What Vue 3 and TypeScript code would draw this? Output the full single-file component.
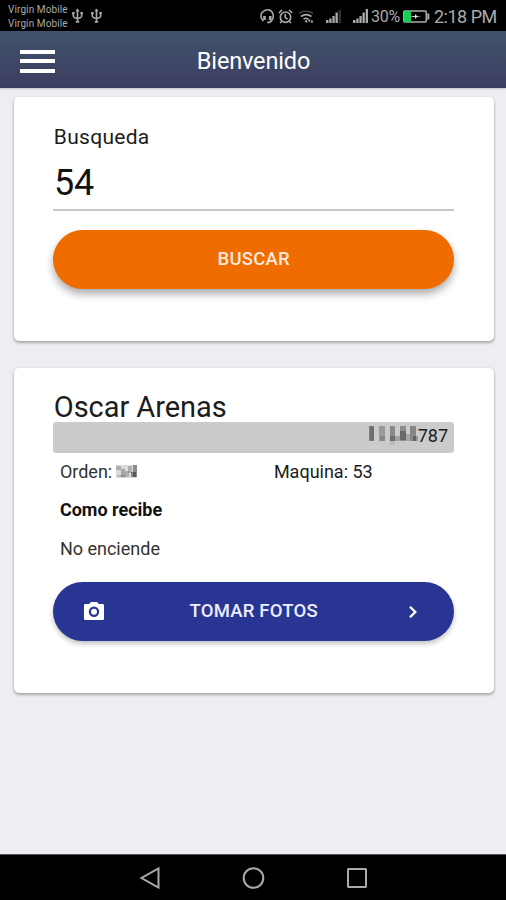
<script setup lang="ts">
import { ref } from 'vue'

const query = ref('54')
const carriers = ['Virgin Mobile', 'Virgin Mobile']

interface Cell { x: number; y: number; w: number; h: number; o: number }

const idMask: Cell[] = [
  { x: 0, y: 2, w: 5, h: 15, o: 0.38 }, { x: 1, y: 3, w: 4, h: 13, o: 0.12 },
  { x: 10, y: 2, w: 6, h: 15, o: 0.24 }, { x: 11, y: 12, w: 5, h: 5, o: 0.12 },
  { x: 21, y: 2, w: 5, h: 15, o: 0.32 }, { x: 21, y: 12, w: 10, h: 5, o: 0.2 },
  { x: 31, y: 2, w: 6, h: 15, o: 0.3 }, { x: 31, y: 7, w: 6, h: 9, o: 0.25 },
  { x: 37, y: 10, w: 4, h: 7, o: 0.18 }, { x: 41, y: 2, w: 6, h: 15, o: 0.34 },
  { x: 44, y: 12, w: 5, h: 5, o: 0.25 }, { x: 21, y: 17, w: 5, h: 4, o: 0.08 },
]
const orderMask: Cell[] = [
  { x: 0, y: 0, w: 21, h: 13, o: 0.14 }, { x: 0, y: 1, w: 5, h: 4, o: 0.2 },
  { x: 5, y: 4, w: 4, h: 8, o: 0.24 }, { x: 9, y: 6, w: 4, h: 6, o: 0.2 },
  { x: 12, y: 1, w: 4, h: 7, o: 0.2 }, { x: 15, y: 7, w: 5, h: 5, o: 0.38 },
  { x: 17, y: 0, w: 4, h: 12, o: 0.36 }, { x: 1, y: 10, w: 8, h: 2, o: 0.15 },
]
</script>

<template>
  <div class="screen">
    <div class="status">
      <div class="carriers">
        <span v-for="(c, i) in carriers" :key="i">{{ c }}</span>
      </div>
      <svg v-for="n in 2" :key="n" class="usb" width="11" height="16" viewBox="0 0 11 16">
        <path d="M5.5 1v13M1.3 4.5v3.2q0 2 4.2 2.8 4.2-.8 4.2-2.8V4.5" />
        <path d="M3.5 3.5 5.5.5l2 3zM3.8 13h3.4v1.8H3.8zM.2 4h2.4v2.2H.2zM8.4 4h2.4v2.2H8.4z" class="solid" />
      </svg>
      <span class="spacer"></span>
      <svg class="headset" width="15" height="15" viewBox="0 0 15 15">
        <path d="M3.5 12C0 9.5.2 4.5 3.2 2.5 6 .2 9.6.5 11.8 2.7c2 2.2 2 6.3 0 8.3" />
        <path d="M4.5 7v4M10.2 7v4" class="thick" />
        <path d="M12 10.5q-.5 3-4.8 3" />
      </svg>
      <svg class="alarm" width="15" height="15" viewBox="0 0 15 15">
        <circle cx="7.5" cy="8.2" r="5.2" />
        <path d="M7.3 5v3.6l2.4 1.5M.8 4 4 1M11 1l3.2 3M3.5 12.5 2 14M11.5 12.5 13 14" />
      </svg>
      <svg class="wifi" width="17" height="15" viewBox="0 0 17 15">
        <path d="M1 4.2Q8 .2 15 4.2" class="dim" />
        <path d="M3 7.5q5.200-3.800 10.500 0M5.500 10.200q2.500-2 5 0" />
        <path d="M6.500 13.300l1.700-3 1.700 3zM9.700 10.500h3l-1.500 3zM12.400 13.600l1.500-3 1.500 3z" class="solid" />
      </svg>
      <svg class="signal" width="16" height="14" viewBox="0 0 16 14">
        <path d="M0 11h2.5v3H0zM3.3 9.5h2.3V14H3.3zM6.4 7h2.3v7H6.4zM9.5 3.5h2.3V14H9.5z" />
        <path d="M12.7 1h2.3v13h-2.3z" class="off" />
      </svg>
      <svg class="signal second" width="16" height="14" viewBox="0 0 16 14">
        <path d="M0 11h2.5v3H0zM3.3 9.5h2.3V14H3.3zM6.4 7h2.3v7H6.4zM9.5 3.5h2.3V14H9.5zM12.7 0H15v14h-2.3z" />
      </svg>
      <span class="percent">30%</span>
      <svg class="battery" width="27" height="13" viewBox="0 0 27 13">
        <rect x=".8" y="1" width="22.5" height="11" rx="1" />
        <path d="M1 1h7v11H1z" class="green" />
        <path d="M24.3 3.5h2v6h-2z" class="solid" />
        <path d="m6 6.5 6-.5V4l2 2 4 .5-4 .6-2 2V7.200z" class="bolt" />
      </svg>
      <span class="clock">2:18 PM</span>
    </div>

    <header class="toolbar">
      <button class="menu" aria-label="Menu"><i></i><i></i><i></i></button>
      <h1>Bienvenido</h1>
      <span></span>
    </header>

    <main>
      <section class="card search">
        <label class="label" for="q">Busqueda</label>
        <input id="q" v-model="query" class="field" type="text" />
        <button class="btn orange"><span class="buscar">BUSCAR</span></button>
      </section>

      <section class="card result">
        <h2>Oscar Arenas</h2>
        <div class="ident">
          <svg class="mask" width="49" height="22" viewBox="0 0 49 22">
            <rect v-for="(c, i) in idMask" :key="i" :x="c.x" :y="c.y" :width="c.w" :height="c.h" :fill-opacity="c.o" />
          </svg>
          <span>787</span>
        </div>
        <div class="cols">
          <div class="order">
            <span>Orden:</span>
            <svg class="mask" width="21" height="13" viewBox="0 0 21 13">
              <rect v-for="(c, i) in orderMask" :key="i" :x="c.x" :y="c.y" :width="c.w" :height="c.h" :fill-opacity="c.o" />
            </svg>
          </div>
          <span class="machine">Maquina: 53</span>
        </div>
        <p class="strong"><b>Como recibe</b></p>
        <p class="note"><span>No enciende</span></p>
        <button class="btn blue">
          <svg width="22" height="20" viewBox="0 0 22 20">
            <path fill-rule="evenodd" d="M2.200 3h4l1.700-2h6.200l1.700 2h4q1.200 0 1.200 1.200v13.500q0 1.200-1.200 1.200H2.200Q1 18.900 1 17.700V4.200Q1 3 2.200 3zM11 5.600a5.200 5.200 0 1 0 0 10.400 5.200 5.200 0 0 0 0-10.400z" />
            <circle cx="11" cy="10.800" r="3" />
          </svg>
          <span class="fotos">TOMAR FOTOS</span>
          <svg class="chevron" width="10" height="14" viewBox="0 0 10 14"><path d="m2 1.700 5.300 5.300L2 12.300" /></svg>
        </button>
      </section>
    </main>

    <nav class="nav">
      <svg width="22" height="24" viewBox="0 0 22 24"><path d="M20.500 2.500v19L3.500 12z" /></svg>
      <svg width="24" height="24" viewBox="0 0 24 24"><circle cx="12.500" cy="12" r="9.800" /></svg>
      <svg width="22" height="24" viewBox="0 0 22 24"><rect x="2" y="3" width="18" height="18" rx=".5" /></svg>
    </nav>
  </div>
</template>

<style>
body { margin: 0; background: #eeedf2; }
</style>

<style scoped>
* { box-sizing: border-box; }
.screen { width: 506px; height: 900px; display: flex; flex-direction: column; background: #eeedf2; font-family: Roboto, "Liberation Sans", sans-serif; color: #1c1c1c; overflow: hidden; }
button { border: 0; padding: 0; font: inherit; }
h1, h2, p { margin: 0; font-weight: 400; }

.status { height: 31px; flex: none; background: #000; color: #aaa; display: flex; align-items: center; padding: 1px 9px 0 8px; white-space: nowrap; }
.status svg { flex: none; fill: none; stroke: #aaa; stroke-width: 1.6; }
.status .solid { fill: #aaa; stroke: none; }
.carriers { display: flex; flex-direction: column; font-size: 10px; line-height: 14px; width: 64px; padding-top: 2px; letter-spacing: .1px; }
.usb { margin-right: 8px; }
.spacer { flex: 1; }
.headset .thick { stroke-width: 2.6; }
.headset { margin-right: 3px; }
.alarm { margin-right: 5px; }
.status .wifi { margin-right: 11px; }
.status .wifi .dim { stroke: #444; }
.signal { margin-right: 11px; }
.status .signal { fill: #aaa; stroke: none; }
.signal .off { fill: #333; }
.signal.second { margin-right: 2px; }
.percent { font-size: 16px; width: 32px; letter-spacing: -.3px; }
.battery { margin-right: 4px; }
.battery .green { fill: #16cf57; stroke: none; }
.battery .bolt { fill: #ddd; stroke: none; }
.clock { font-size: 18px; width: 63px; letter-spacing: -.5px; }

.toolbar { height: 57px; flex: none; display: grid; grid-template-columns: 1fr auto 1fr; align-items: center; padding: 3px 19px 0 20px; background: linear-gradient(#41536c, #3b3d60); color: #fff; box-shadow: 0 1px 2px #0003; }
.toolbar h1 { font-size: 23.500px; line-height: 30px; letter-spacing: -.15px; }
.menu { width: 35px; height: 23px; display: flex; flex-direction: column; justify-content: space-between; background: none; }
.menu i { height: 4px; background: #fff; }

main { flex: 1; padding: 9px 11.600px 0 14.400px; display: flex; flex-direction: column; gap: 27px; }
.card { background: #fff; border-radius: 5px; box-shadow: 0 2px 3px #0000004a, 0 0 3px #00000018; padding: 0 40.400px 0 39px; display: flex; flex-direction: column; }
.search { height: 244px; padding-top: 26px; }
.result { height: 325px; padding-top: 23px; }
.label { font-size: 21px; line-height: 28px; letter-spacing: .3px; padding-left: .4px; }
.field { border: 0; outline: 0; border-bottom: 2px solid #c8c8c8; background: none; padding: 5px 0 0 .5px; width: 100%; height: 60px; font: 400 36px/54px Roboto, sans-serif; color: #111; margin-bottom: 19px; }
.btn { height: 59px; flex: none; width: 100%; border-radius: 30px; color: #fff; font-size: 18.500px; font-weight: 500; display: flex; align-items: center; justify-content: center; }
.orange { background: #ef6c00; color: #ffe9da; box-shadow: 0 5px 8px #00000055; padding-bottom: 2px; }
.blue { background: #283593; color: #eef; box-shadow: 0 3px 5px #0000003c; justify-content: space-between; padding: 0 36px 2px 30px; }
.blue svg { fill: #fff; }
.blue .chevron { fill: none; stroke: #fff; stroke-width: 2.300; margin-top: 2px; }
.buscar { letter-spacing: .2px; }
.fotos { letter-spacing: .2px; margin-right: 6px; }

.result h2 { font-size: 29px; line-height: 32px; margin-bottom: -1px; letter-spacing: -.05px; padding-left: .4px; }
.ident { height: 31px; background: #cbcbcb; border-radius: 3px; display: flex; justify-content: flex-end; align-items: flex-start; padding: 2px 6px 0 0; font-size: 18px; line-height: 23px; }
.cols { display: grid; grid-template-columns: 214px 1fr; height: 37px; padding-left: 6.500px; font-size: 18px; line-height: 37px; }
.order { display: flex; align-items: center; gap: 4px; color: #333; }
.strong, .note { padding-left: 6.500px; font-size: 18px; line-height: 39px; height: 39px; }
.strong { color: #111; }
.note { margin-bottom: 14px; color: #333; }

.nav { height: 46px; flex: none; background: #000; border-top: 1px solid #555; display: flex; justify-content: center; align-items: center; gap: 81px; }
.nav svg { fill: none; stroke: #aaa; stroke-width: 2; }
</style>
